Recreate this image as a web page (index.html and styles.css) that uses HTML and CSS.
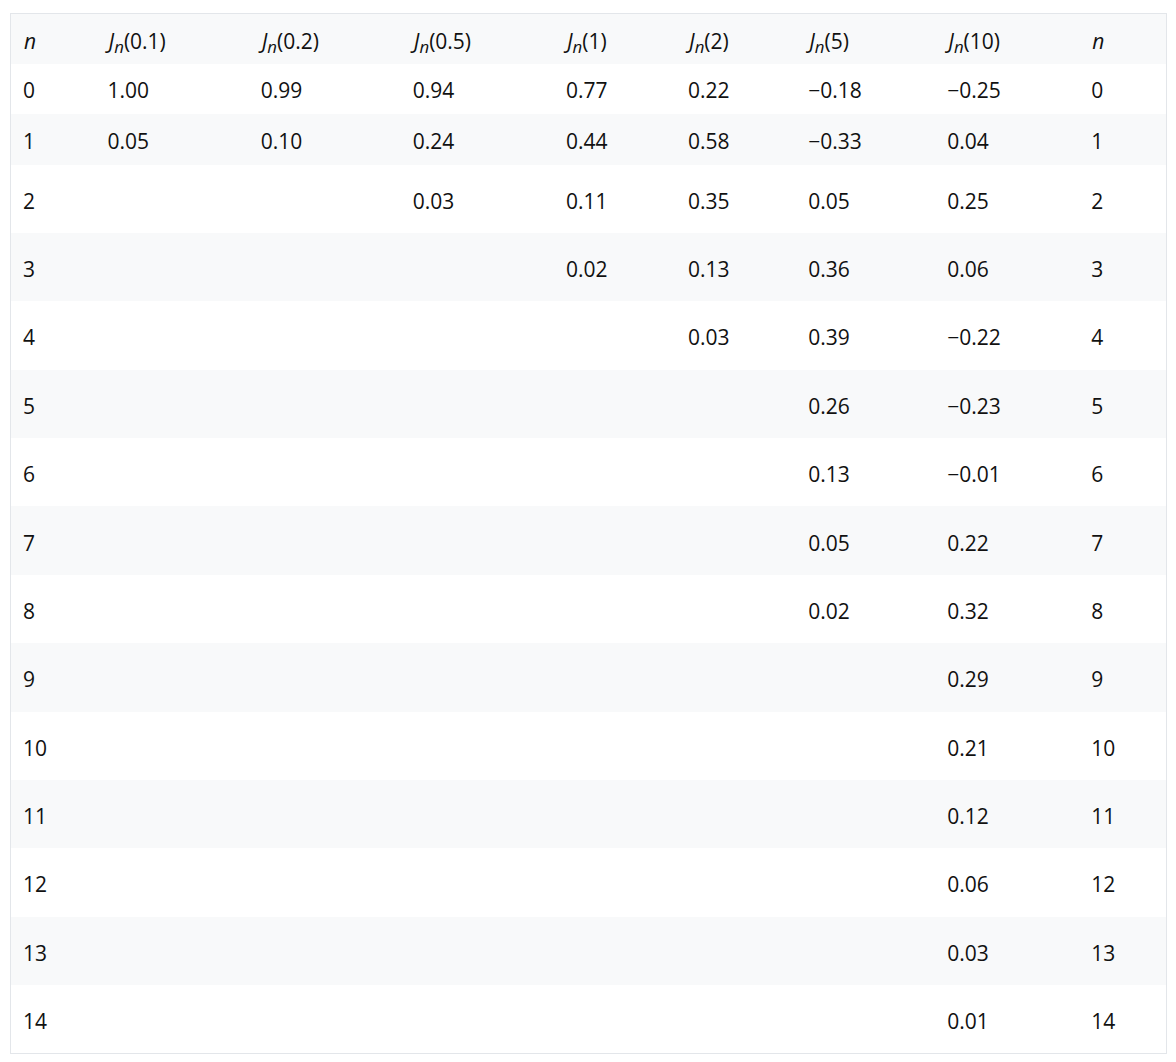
FILE: index.html
```html
<!DOCTYPE html>
<html>
<head>
<meta charset="utf-8">
<link rel="stylesheet" href="styles.css">
</head>
<body>
<table class="bessel">
<colgroup>
<col class="c0"><col class="c1"><col class="c2"><col class="c3"><col class="c4"><col class="c5"><col class="c6"><col class="c7"><col class="c8">
</colgroup>
<thead>
<tr class="head">
<th><i>n</i></th>
<th><i>J<sub>n</sub></i>(0.1)</th>
<th><i>J<sub>n</sub></i>(0.2)</th>
<th><i>J<sub>n</sub></i>(0.5)</th>
<th><i>J<sub>n</sub></i>(1)</th>
<th><i>J<sub>n</sub></i>(2)</th>
<th><i>J<sub>n</sub></i>(5)</th>
<th><i>J<sub>n</sub></i>(10)</th>
<th><i>n</i></th>
</tr>
</thead>
<tbody>
<tr class="short"><td>0</td><td>1.00</td><td>0.99</td><td>0.94</td><td>0.77</td><td>0.22</td><td>−0.18</td><td>−0.25</td><td>0</td></tr>
<tr class="short second"><td>1</td><td>0.05</td><td>0.10</td><td>0.24</td><td>0.44</td><td>0.58</td><td>−0.33</td><td>0.04</td><td>1</td></tr>
<tr><td>2</td><td></td><td></td><td>0.03</td><td>0.11</td><td>0.35</td><td>0.05</td><td>0.25</td><td>2</td></tr>
<tr><td>3</td><td></td><td></td><td></td><td>0.02</td><td>0.13</td><td>0.36</td><td>0.06</td><td>3</td></tr>
<tr><td>4</td><td></td><td></td><td></td><td></td><td>0.03</td><td>0.39</td><td>−0.22</td><td>4</td></tr>
<tr><td>5</td><td></td><td></td><td></td><td></td><td></td><td>0.26</td><td>−0.23</td><td>5</td></tr>
<tr><td>6</td><td></td><td></td><td></td><td></td><td></td><td>0.13</td><td>−0.01</td><td>6</td></tr>
<tr><td>7</td><td></td><td></td><td></td><td></td><td></td><td>0.05</td><td>0.22</td><td>7</td></tr>
<tr><td>8</td><td></td><td></td><td></td><td></td><td></td><td>0.02</td><td>0.32</td><td>8</td></tr>
<tr><td>9</td><td></td><td></td><td></td><td></td><td></td><td></td><td>0.29</td><td>9</td></tr>
<tr><td>10</td><td></td><td></td><td></td><td></td><td></td><td></td><td>0.21</td><td>10</td></tr>
<tr><td>11</td><td></td><td></td><td></td><td></td><td></td><td></td><td>0.12</td><td>11</td></tr>
<tr><td>12</td><td></td><td></td><td></td><td></td><td></td><td></td><td>0.06</td><td>12</td></tr>
<tr><td>13</td><td></td><td></td><td></td><td></td><td></td><td></td><td>0.03</td><td>13</td></tr>
<tr><td>14</td><td></td><td></td><td></td><td></td><td></td><td></td><td>0.01</td><td>14</td></tr>
</tbody>
</table>
</body>
</html>
```
FILE: styles.css
```css
html, body {
  margin: 0;
  padding: 0;
  background: #ffffff;
}
body {
  padding: 13px 0 0 10px;
  font-family: "Open Sans", "Noto Sans", sans-serif;
  font-size: 21px;
  color: #111111;
}
.bessel {
  border-collapse: collapse;
  border: 1px solid #e3e6ea;
  table-layout: fixed;
  width: 1157px;
}
.c0 { width: 85px; }
.c1 { width: 153px; }
.c2 { width: 152px; }
.c3 { width: 153px; }
.c4 { width: 122px; }
.c5 { width: 120px; }
.c6 { width: 139px; }
.c7 { width: 144px; }
.c8 { width: 87px; }
.bessel th,
.bessel td {
  padding: 5px 12px 0;
  text-align: left;
  vertical-align: middle;
  font-weight: normal;
  line-height: 1.3;
  white-space: nowrap;
}
.bessel th {
  height: 50px;
  box-sizing: border-box;
  padding-left: 13px;
}
.bessel tbody td {
  height: 68.4px;
  box-sizing: border-box;
}
.bessel tbody tr.short td {
  height: 50px;
}
.bessel tbody tr.short.second td {
  height: 51px;
}
.head {
  background: #f8f9fa;
}
.bessel tbody tr:nth-child(even) {
  background: #f8f9fa;
}
.bessel sub {
  font-size: 0.8em;
  vertical-align: -0.25em;
  line-height: 0;
}
```
